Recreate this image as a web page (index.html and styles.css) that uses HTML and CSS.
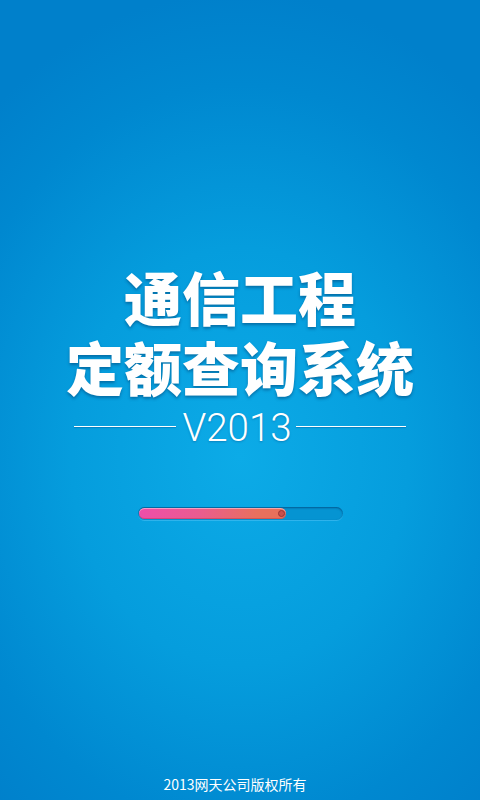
FILE: index.html
```html
<!DOCTYPE html>
<html lang="zh-CN">
<head>
<meta charset="utf-8">
<title>通信工程定额查询系统</title>
<link rel="stylesheet" href="styles.css">
</head>
<body>
<div class="screen">
  <div class="hero">
    <h1 class="title">
      <span class="title-line">通信工程</span>
      <span class="title-line">定额查询系统</span>
    </h1>
    <div class="version-row">
      <span class="rule rule-left"></span>
      <span class="version">V2013</span>
      <span class="rule rule-right"></span>
    </div>
    <div class="progress">
      <div class="progress-fill" style="width:147px">
        <span class="progress-knob"></span>
      </div>
    </div>
  </div>
  <div class="footer">2013网天公司版权所有</div>
</div>
</body>
</html>
```
FILE: styles.css
```css
html, body {
  margin: 0;
  padding: 0;
}
body {
  width: 480px;
  height: 800px;
  overflow: hidden;
}
.screen {
  width: 480px;
  height: 800px;
  display: flex;
  flex-direction: column;
  background:
    radial-gradient(ellipse 78% 58% at 50% 57%, #0cabe7 0%, #059ddd 45%, #0088d0 80%, #0080cb 100%);
  font-family: "Noto Sans CJK SC", "Noto Sans", sans-serif;
  color: #fff;
}
.hero {
  display: flex;
  flex-direction: column;
  align-items: center;
  padding-top: 267px;
}
.title {
  margin: 0;
  display: flex;
  flex-direction: column;
  align-items: center;
  gap: 12px;
  font-family: "Noto Sans CJK SC", sans-serif;
  font-weight: 900;
  font-size: 58px;
  line-height: 58px;
  color: #fff;
  text-shadow: 0 2px 3px rgba(0, 50, 100, 0.45);
}
.title-line {
  display: block;
  white-space: nowrap;
}
.version-row {
  margin-top: 15px;
  display: flex;
  align-items: flex-start;
  justify-content: center;
  height: 36px;
}
.rule {
  display: block;
  height: 1px;
  margin-top: 16px;
  background: #ffffff;
  box-shadow: 0 1px 1px rgba(0, 70, 130, 0.35);
}
.rule-left {
  width: 102px;
  margin-right: 6px;
}
.rule-right {
  width: 110px;
  margin-left: 4px;
}
.version {
  font-family: Roboto, "Liberation Sans", sans-serif;
  font-weight: 300;
  font-size: 38.5px;
  line-height: 36px;
  color: #fff;
  text-shadow: 0 1px 2px rgba(0, 60, 120, 0.35);
}
.progress {
  margin-top: 61px;
  width: 205px;
  height: 13px;
  box-sizing: border-box;
  border-radius: 7px;
  background: #0594d2;
  box-shadow: inset 0 1px 2px rgba(0, 50, 100, 0.6), 0 1px 0 rgba(120, 210, 255, 0.35);
  padding: 1px;
  display: flex;
}
.progress-fill {
  position: relative;
  height: 11px;
  border-radius: 6px;
  background: linear-gradient(to right, #ee4ea9 0%, #ea5c90 40%, #e8705e 80%, #e8705a 100%);
  box-shadow: inset 0 1px 0 rgba(255, 200, 220, 0.6), inset 0 -1px 0 rgba(170, 40, 60, 0.35);
}
.progress-knob {
  position: absolute;
  right: 1px;
  top: 2px;
  width: 7px;
  height: 7px;
  box-sizing: border-box;
  border-radius: 50%;
  background: #c7504d;
  border: 1.5px solid #9b3434;
}
.footer {
  margin-top: auto;
  padding-bottom: 6px;
  padding-right: 10px;
  text-align: center;
  font-family: "Noto Sans CJK SC", sans-serif;
  font-size: 14px;
  line-height: 20px;
  color: #fff;
}
```
